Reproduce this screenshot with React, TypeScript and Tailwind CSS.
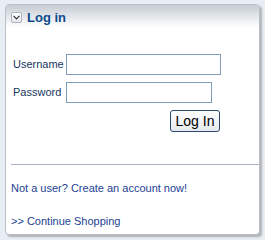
import React from "react";

export default function App() {
  return (
    <div className="w-[265px] h-[240px] bg-[#e9eef4] pt-[4px] pl-[5px] font-['Liberation_Sans',Arial,sans-serif]">
      <div className="w-[255px] h-[231px] bg-white border border-[#b9c0c9] rounded-[4px] shadow-[2px_2px_2px_rgba(0,0,0,0.25)] flex flex-col overflow-hidden">
        <div className="h-[22px] shrink-0 bg-gradient-to-b from-[#c6ccd4] to-white flex items-center gap-[5px] pl-[5px] pt-[3px]">
          <div className="w-[11px] h-[11px] border border-[#aab4c0] rounded-[2px] bg-gradient-to-b from-white to-[#e3e8ee] flex items-center justify-center">
            <svg width="7" height="5" viewBox="0 0 7 5">
              <path d="M0.5 0.8 L3.5 3.8 L6.5 0.8" fill="none" stroke="#333" strokeWidth="1.2" />
            </svg>
          </div>
          <span className="text-[13px] font-bold text-[#0c4a8c]">Log in</span>
        </div>
        <div className="flex flex-col gap-[7px] pt-[27px] pl-[7px] shrink-0">
          <div className="flex items-center">
            <span className="w-[53px] text-[11px] text-[#16365f]">Username</span>
            <input className="w-[155px] h-[21px] border border-[#7f9db9] bg-white outline-none" />
          </div>
          <div className="flex items-center">
            <span className="w-[53px] text-[11px] text-[#16365f]">Password</span>
            <input type="password" className="w-[146px] h-[21px] border border-[#7f9db9] bg-white outline-none" />
          </div>
        </div>
        <div className="flex pl-[164px] pt-[7px] shrink-0">
          <button className="w-[50px] h-[22px] border border-[#2c4a6e] rounded-[3px] bg-gradient-to-b from-white to-[#e6e9ee] text-[14px] text-black leading-none">
            Log In
          </button>
        </div>
        <div className="mt-[32px] ml-[5px] h-px shrink-0 bg-[#a9b1c4]" />
        <div className="pl-[5px] pt-[16px] text-[11px] leading-[14px] text-[#1c3f94]">Not a user? Create an account now!</div>
        <div className="pl-[5px] pt-[19px] text-[11px] leading-[14px] text-[#1c3f94]">&gt;&gt; Continue Shopping</div>
      </div>
    </div>
  );
}
